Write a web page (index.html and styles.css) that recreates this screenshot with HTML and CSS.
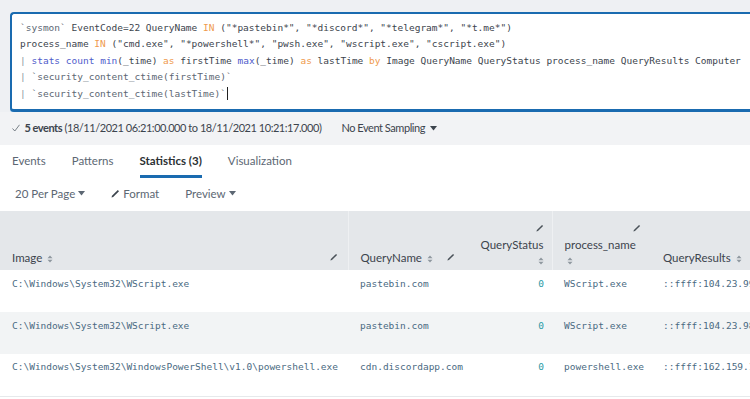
FILE: index.html
```html
<!DOCTYPE html>
<html>
<head>
    <title>Search</title>
    <link rel="stylesheet" href="styles.css">
</head>
<body>
    <div class="search-wrap">
        <div class="search-box">
            <div class="code-line"><span class="macro">`sysmon`</span> EventCode=22 QueryName <span class="kw-op">IN</span> ("*pastebin*", "*discord*", "*telegram*", "*t.me*")</div>
            <div class="code-line">process_name <span class="kw-op">IN</span> ("cmd.exe", "*powershell*", "pwsh.exe", "wscript.exe", "cscript.exe")</div>
            <div class="code-line"><span class="pipe">|</span> <span class="kw-cmd">stats</span> <span class="kw-cmd">count</span> <span class="kw-cmd">min</span>(_time) <span class="kw-op">as</span> firstTime <span class="kw-cmd">max</span>(_time) <span class="kw-op">as</span> lastTime <span class="kw-op">by</span> Image QueryName QueryStatus process_name QueryResults Computer</div>
            <div class="code-line"><span class="pipe">|</span> <span class="macro">`security_content_ctime(firstTime)`</span></div>
            <div class="code-line"><span class="pipe">|</span> <span class="macro">`security_content_ctime(lastTime)`</span><span class="cursor"></span></div>
        </div>
    </div>

    <div class="status-bar">
        <div class="status-count">
            <svg class="check" width="8" height="8" viewBox="0 0 8 8"><path d="M0.5 4.5 L2.8 7 L7.5 0.8" fill="none" stroke="#6b747c" stroke-width="0.9"/></svg>
            <b>5 events</b>&nbsp;(18/11/2021 06:21:00.000 to 18/11/2021 10:21:17.000)
        </div>
        <div class="status-sampling">No Event Sampling <svg class="caret" width="7" height="5" viewBox="0 0 7 5"><path d="M0 0 H7 L3.5 4.5 Z" fill="#3c444d"/></svg></div>
    </div>

    <div class="tabs">
        <div class="tab">Events</div>
        <div class="tab">Patterns</div>
        <div class="tab active">Statistics (3)</div>
        <div class="tab">Visualization</div>
    </div>

    <div class="toolbar">
        <div class="tool">20 Per Page <svg class="caret" width="7" height="5" viewBox="0 0 7 5"><path d="M0 0 H7 L3.5 4.5 Z" fill="#5c6773"/></svg></div>
        <div class="tool"><svg class="pencil" width="9" height="9" viewBox="0 0 9 9"><path d="M0.5 8.5 L1 6.8 L6.8 1 L8 2.2 L2.2 8 Z" fill="#3c444d"/></svg>Format</div>
        <div class="tool">Preview <svg class="caret" width="7" height="5" viewBox="0 0 7 5"><path d="M0 0 H7 L3.5 4.5 Z" fill="#5c6773"/></svg></div>
    </div>

    <div class="table-wrap">
        <table class="results">
            <colgroup>
                <col style="width:348px">
                <col style="width:117px">
                <col style="width:87px">
                <col style="width:99px">
                <col style="width:140px">
                <col style="width:140px">
            </colgroup>
            <thead>
                <tr>
                    <th>
                        <div class="th-row">
                            <span>Image <svg class="sort" width="6" height="8" viewBox="0 0 6 8"><path d="M0.5 3.3 L3 0.5 L5.5 3.3 Z M0.5 4.7 L3 7.5 L5.5 4.7 Z" fill="#8f989f"/></svg></span>
                            <svg class="pencil" width="8" height="8" viewBox="0 0 9 9"><path d="M0.5 8.5 L1 6.8 L6.8 1 L8 2.2 L2.2 8 Z" fill="#4a5259"/></svg>
                        </div>
                    </th>
                    <th class="split">
                        <div class="th-row">
                            <span>QueryName <svg class="sort" width="6" height="8" viewBox="0 0 6 8"><path d="M0.5 3.3 L3 0.5 L5.5 3.3 Z M0.5 4.7 L3 7.5 L5.5 4.7 Z" fill="#8f989f"/></svg></span>
                            <svg class="pencil" width="8" height="8" viewBox="0 0 9 9"><path d="M0.5 8.5 L1 6.8 L6.8 1 L8 2.2 L2.2 8 Z" fill="#4a5259"/></svg>
                        </div>
                    </th>
                    <th class="right">
                        <div class="th-stack">
                            <svg class="pencil top" width="8" height="8" viewBox="0 0 9 9"><path d="M0.5 8.5 L1 6.8 L6.8 1 L8 2.2 L2.2 8 Z" fill="#4a5259"/></svg>
                            <span>QueryStatus</span>
                            <svg class="sort" width="6" height="8" viewBox="0 0 6 8"><path d="M0.5 3.3 L3 0.5 L5.5 3.3 Z M0.5 4.7 L3 7.5 L5.5 4.7 Z" fill="#8f989f"/></svg>
                        </div>
                    </th>
                    <th class="split">
                        <div class="th-stack left">
                            <svg class="pencil top" width="8" height="8" viewBox="0 0 9 9"><path d="M0.5 8.5 L1 6.8 L6.8 1 L8 2.2 L2.2 8 Z" fill="#4a5259"/></svg>
                            <span>process_name</span>
                            <svg class="sort" width="6" height="8" viewBox="0 0 6 8"><path d="M0.5 3.3 L3 0.5 L5.5 3.3 Z M0.5 4.7 L3 7.5 L5.5 4.7 Z" fill="#8f989f"/></svg>
                        </div>
                    </th>
                    <th>
                        <div class="th-row">
                            <span>QueryResults <svg class="sort" width="6" height="8" viewBox="0 0 6 8"><path d="M0.5 3.3 L3 0.5 L5.5 3.3 Z M0.5 4.7 L3 7.5 L5.5 4.7 Z" fill="#8f989f"/></svg></span>
                        </div>
                    </th>
                    <th>
                        <div class="th-row"><span>Computer</span></div>
                    </th>
                </tr>
            </thead>
            <tbody>
                <tr>
                    <td class="str">C:\Windows\System32\WScript.exe</td>
                    <td class="str">pastebin.com</td>
                    <td class="num">0</td>
                    <td class="str">WScript.exe</td>
                    <td class="str">::ffff:104.23.99.190</td>
                    <td class="str">WIN-DC</td>
                </tr>
                <tr>
                    <td class="str">C:\Windows\System32\WScript.exe</td>
                    <td class="str">pastebin.com</td>
                    <td class="num">0</td>
                    <td class="str">WScript.exe</td>
                    <td class="str">::ffff:104.23.98.190</td>
                    <td class="str">WIN-DC</td>
                </tr>
                <tr>
                    <td class="str">C:\Windows\System32\WindowsPowerShell\v1.0\powershell.exe</td>
                    <td class="str">cdn.discordapp.com</td>
                    <td class="num">0</td>
                    <td class="str">powershell.exe</td>
                    <td class="str">::ffff:162.159.135.233</td>
                    <td class="str">WIN-DC</td>
                </tr>
            </tbody>
        </table>
    </div>
</body>
</html>
```
FILE: styles.css
```css
body {
    margin: 0;
    background: #fff;
    font-family: Lato, "Open Sans", Arial, sans-serif;
    color: #3c444d;
    overflow: hidden;
}
.search-wrap {
    background: #eef0f3;
    padding: 12px 0 0 10px;
}
.search-box {
    background: #fff;
    border: 2px solid #1a6bb0;
    border-right: none;
    border-bottom: 3px solid #1a6bb0;
    border-radius: 4px 0 0 4px;
    padding: 6px 0 7px 8px;
    font-family: "DejaVu Sans Mono", "Liberation Mono", monospace;
    font-size: 9.5px;
    line-height: 16.4px;
    color: #3c444d;
    box-shadow: 0 1px 0 #a9d0f0;
}
.code-line {
    white-space: pre;
}
.macro {
    color: #5c6773;
}
.pipe {
    color: #8b959e;
}
.kw-op {
    color: #ef9a4c;
}
.kw-cmd {
    color: #4f5ccb;
}
.cursor {
    display: inline-block;
    width: 1px;
    height: 13px;
    background: #222;
    vertical-align: -3px;
    margin-left: 1px;
}
.status-bar {
    display: flex;
    align-items: center;
    gap: 20px;
    height: 30px;
    padding: 0 0 3px 12px;
    background: #f2f3f5;
    font-size: 11px;
    letter-spacing: -0.45px;
    color: #3c444d;
}
.status-count b {
    font-weight: 700;
}
.check {
    margin-right: 2px;
}
.caret {
    margin-left: 3px;
    vertical-align: 1px;
}
.tabs {
    display: flex;
    height: 33px;
    padding-left: 12px;
}
.tab {
    display: flex;
    align-items: center;
    margin-right: 26px;
    font-size: 11.5px;
    color: #5c6773;
    border-bottom: 3px solid transparent;
    padding-top: 1px;
}
.tab.active {
    color: #2b3033;
    font-weight: 700;
    border-bottom-color: #1a6bb0;
}
.toolbar {
    display: flex;
    align-items: center;
    height: 31px;
    padding: 0 0 2px 15px;
    gap: 26px;
}
.tool {
    font-size: 11.5px;
    color: #5c6773;
    display: flex;
    align-items: center;
}
.tool .pencil {
    margin-right: 3px;
}
.table-wrap {
    overflow: hidden;
    width: 750px;
}
.results {
    border-collapse: collapse;
    table-layout: fixed;
    width: 931px;
}
.results th {
    box-sizing: border-box;
    background: #e4e7ea;
    height: 59px;
    padding: 0 10px 5px 12px;
    vertical-align: bottom;
    text-align: left;
    font-weight: 400;
    font-size: 11.5px;
    color: #3c444d;
}
.results th.split {
    border-left: 1px solid #eef0f2;
}
.th-row {
    display: flex;
    justify-content: space-between;
    align-items: center;
    height: 16px;
}
.th-stack {
    display: flex;
    flex-direction: column;
    align-items: flex-end;
    gap: 6px;
}
.th-stack.left {
    align-items: flex-start;
}
.th-stack.left .pencil.top {
    align-self: flex-end;
}
.results th.right {
    padding-right: 8px;
}
.sort {
    vertical-align: -1px;
    margin-left: 2px;
}
.results td {
    box-sizing: border-box;
    height: 42px;
    padding: 0 10px 16px 12px;
    font-family: "DejaVu Sans Mono", "Liberation Mono", monospace;
    font-size: 9.5px;
    white-space: nowrap;
    overflow: hidden;
    vertical-align: middle;
}
.results tbody tr:nth-child(2) td {
    background: #f2f4f5;
}
.results tbody tr:last-child td {
    border-bottom: 1px solid #e6e9eb;
}
.results td.str {
    color: #4a6a82;
}
.results td.num {
    color: #2b9aa6;
    text-align: right;
    padding-right: 8px;
}
```
